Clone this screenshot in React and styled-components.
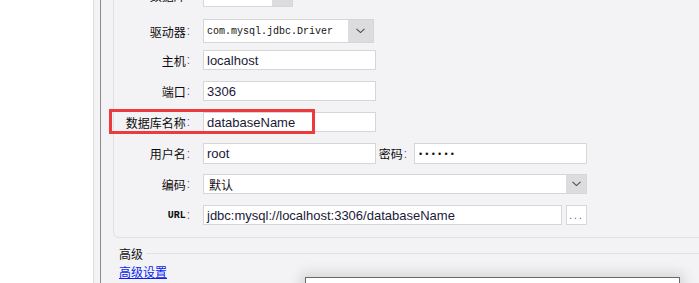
import React from 'react';
import styled, { createGlobalStyle } from 'styled-components';

const Global = createGlobalStyle`
  html, body { margin: 0; padding: 0; background: #fff; }
  body { font-family: "Noto Sans CJK SC", "Liberation Sans", sans-serif; }
`;

const Page = styled.div`
  position: relative;
  display: flex;
  width: 699px;
  height: 283px;
  overflow: hidden;
  background: #f3f3f5;
`;

const Sidebar = styled.div`
  flex: none;
  width: 93px;
  background: #fff;
  border-right: 1px solid #dcdcdc;
`;

const Gutter = styled.div`
  flex: none;
  width: 6px;
  background: #f3f3f5;
  border-right: 1px solid #8c8c8c;
`;

const Main = styled.div`
  flex: 1;
  min-width: 0;
  padding-left: 12px;
  display: flex;
  flex-direction: column;
`;

const Group = styled.div`
  margin-top: -26px;
  margin-right: -30px;
  border: 1px solid #e0e0e3;
  border-radius: 6px;
  padding-top: 8px;
  display: flex;
  flex-direction: column;
`;

const Row = styled.div`
  position: relative;
  display: flex;
  align-items: flex-start;
  height: ${p => p.$h}px;
`;

const Label = styled.div`
  flex: none;
  width: ${p => p.$w || 76}px;
  height: ${p => p.$ch}px;
  margin-right: ${p => p.$mr ?? 13}px;
  margin-left: ${p => p.$ml || 0}px;
  display: flex;
  align-items: center;
  justify-content: flex-end;
  font-size: 12px;
  color: #0c0c0c;
  white-space: nowrap;
  font-family: ${p => p.$mono ? '"Liberation Mono", monospace' : '"Noto Sans CJK SC", sans-serif'};
  font-weight: ${p => p.$mono ? 700 : 400};
`;

const MonoText = styled.span`
  font-size: 10px;
`;

const Colon = styled.span`
  color: #8a3f9c;
  font-family: "Liberation Sans", sans-serif;
  font-weight: 400;
  font-size: 12px;
  margin-left: 1px;
`;

const Field = styled.div`
  flex: none;
  box-sizing: border-box;
  width: ${p => p.$w}px;
  height: ${p => p.$h}px;
  border: 1px solid #d6d6d8;
  background: #fff;
  padding-left: 3px;
  display: flex;
  align-items: center;
  font-family: "Liberation Sans", Arial, sans-serif;
  font-size: 13px;
  color: #1a1a38;
  white-space: nowrap;
  overflow: hidden;
`;

const Select = styled.div`
  flex: none;
  box-sizing: border-box;
  width: ${p => p.$w}px;
  height: ${p => p.$h}px;
  border: 1px solid #d6d6d8;
  background: #fff;
  display: flex;
  align-items: stretch;
  overflow: hidden;
`;

const SelectText = styled.div`
  flex: 1;
  min-width: 0;
  display: flex;
  align-items: center;
  padding-left: ${p => p.$pl || 3}px;
  font-family: ${p => p.$mono ? '"Liberation Mono", monospace' : '"Noto Sans CJK SC", sans-serif'};
  font-size: ${p => p.$mono ? '10px' : '12px'};
  color: #111;
  white-space: nowrap;
  overflow: hidden;
`;

const DropBtn = styled.div`
  flex: none;
  width: ${p => p.$w}px;
  background: #dcdcdf;
  display: flex;
  align-items: center;
  justify-content: center;
`;

const Dots = styled.span`
  font-size: 9px;
  letter-spacing: 3.2px;
  color: #111;
  margin-left: 1px;
`;

const MoreBtn = styled.div`
  flex: none;
  box-sizing: border-box;
  width: 21px;
  height: 20px;
  margin-left: 4px;
  border: 1px solid #d6d6d8;
  background: #fff;
  display: flex;
  align-items: flex-end;
  justify-content: center;
  padding-bottom: 5px;
  font-family: "Liberation Sans", sans-serif;
  font-size: 10px;
  line-height: 6px;
  letter-spacing: 2px;
  color: #7a2f9a;
`;

const Highlight = styled.div`
  position: absolute;
  left: -5px;
  top: -3px;
  width: 206px;
  height: 25px;
  box-sizing: border-box;
  border: 3px solid #ec3a3d;
  pointer-events: none;
`;

const SectionHead = styled.div`
  margin-top: 7px;
  height: 16px;
  padding-left: 6px;
  display: flex;
  align-items: center;
  font-size: 12px;
  color: #111;
`;

const SectionLine = styled.div`
  flex: 1;
  margin-left: 3px;
  border-top: 1px solid #e2e2e5;
`;

const Link = styled.a`
  margin-top: 3px;
  margin-left: 6px;
  align-self: flex-start;
  font-size: 12px;
  line-height: 16px;
  color: #0a1ef0;
  text-decoration: underline;
  cursor: pointer;
`;

const Popup = styled.div`
  position: absolute;
  left: 305px;
  top: 277px;
  width: 375px;
  height: 80px;
  box-sizing: border-box;
  background: #fff;
  border: 1px solid #6a6a6a;
  box-shadow: 0 0 12px 4px rgba(0, 0, 0, 0.12);
`;

const Chevron = () => (
  <svg width="9" height="6" viewBox="0 0 9 6">
    <polyline points="0.5,0.8 4.5,4.6 8.5,0.8" fill="none" stroke="#4a4a4a" strokeWidth="1.1" />
  </svg>
);

const L = ({ children, ...rest }) => (
  <Label {...rest}>
    {children}
    <Colon>:</Colon>
  </Label>
);

export default function App() {
  return (
    <>
      <Global />
      <Page>
        <Sidebar />
        <Gutter />
        <Main>
          <Group>
            <Row $h={36}>
              <L $ch={24}>数据库</L>
              <Select $w={90} $h={24}>
                <SelectText $mono $pl={4}>mysql</SelectText>
                <DropBtn $w={20}><Chevron /></DropBtn>
              </Select>
            </Row>
            <Row $h={31}>
              <L $ch={24}>驱动器</L>
              <Select $w={171} $h={24}>
                <SelectText $mono $pl={3}>com.mysql.jdbc.Driver</SelectText>
                <DropBtn $w={25}><Chevron /></DropBtn>
              </Select>
            </Row>
            <Row $h={31}>
              <L $ch={20}>主机</L>
              <Field $w={173} $h={20}>localhost</Field>
            </Row>
            <Row $h={31}>
              <L $ch={20}>端口</L>
              <Field $w={173} $h={20}>3306</Field>
            </Row>
            <Row $h={31}>
              <L $ch={20}>数据库名称</L>
              <Field $w={173} $h={20}>databaseName</Field>
              <Highlight />
            </Row>
            <Row $h={31}>
              <L $ch={21}>用户名</L>
              <Field $w={173} $h={21}>root</Field>
              <L $ch={21} $w={27} $ml={4} $mr={7}>密码</L>
              <Field $w={173} $h={21}><Dots>••••••</Dots></Field>
            </Row>
            <Row $h={31}>
              <L $ch={20}>编码</L>
              <Select $w={384} $h={20}>
                <SelectText $pl={5}>默认</SelectText>
                <DropBtn $w={20}><Chevron /></DropBtn>
              </Select>
            </Row>
            <Row $h={32}>
              <L $ch={20} $mono><MonoText>URL</MonoText></L>
              <Field $w={359} $h={20}>jdbc:mysql://localhost:3306/databaseName</Field>
              <MoreBtn>...</MoreBtn>
            </Row>
          </Group>
          <SectionHead>
            高级
            <SectionLine />
          </SectionHead>
          <Link>高级设置</Link>
        </Main>
        <Popup />
      </Page>
    </>
  );
}
